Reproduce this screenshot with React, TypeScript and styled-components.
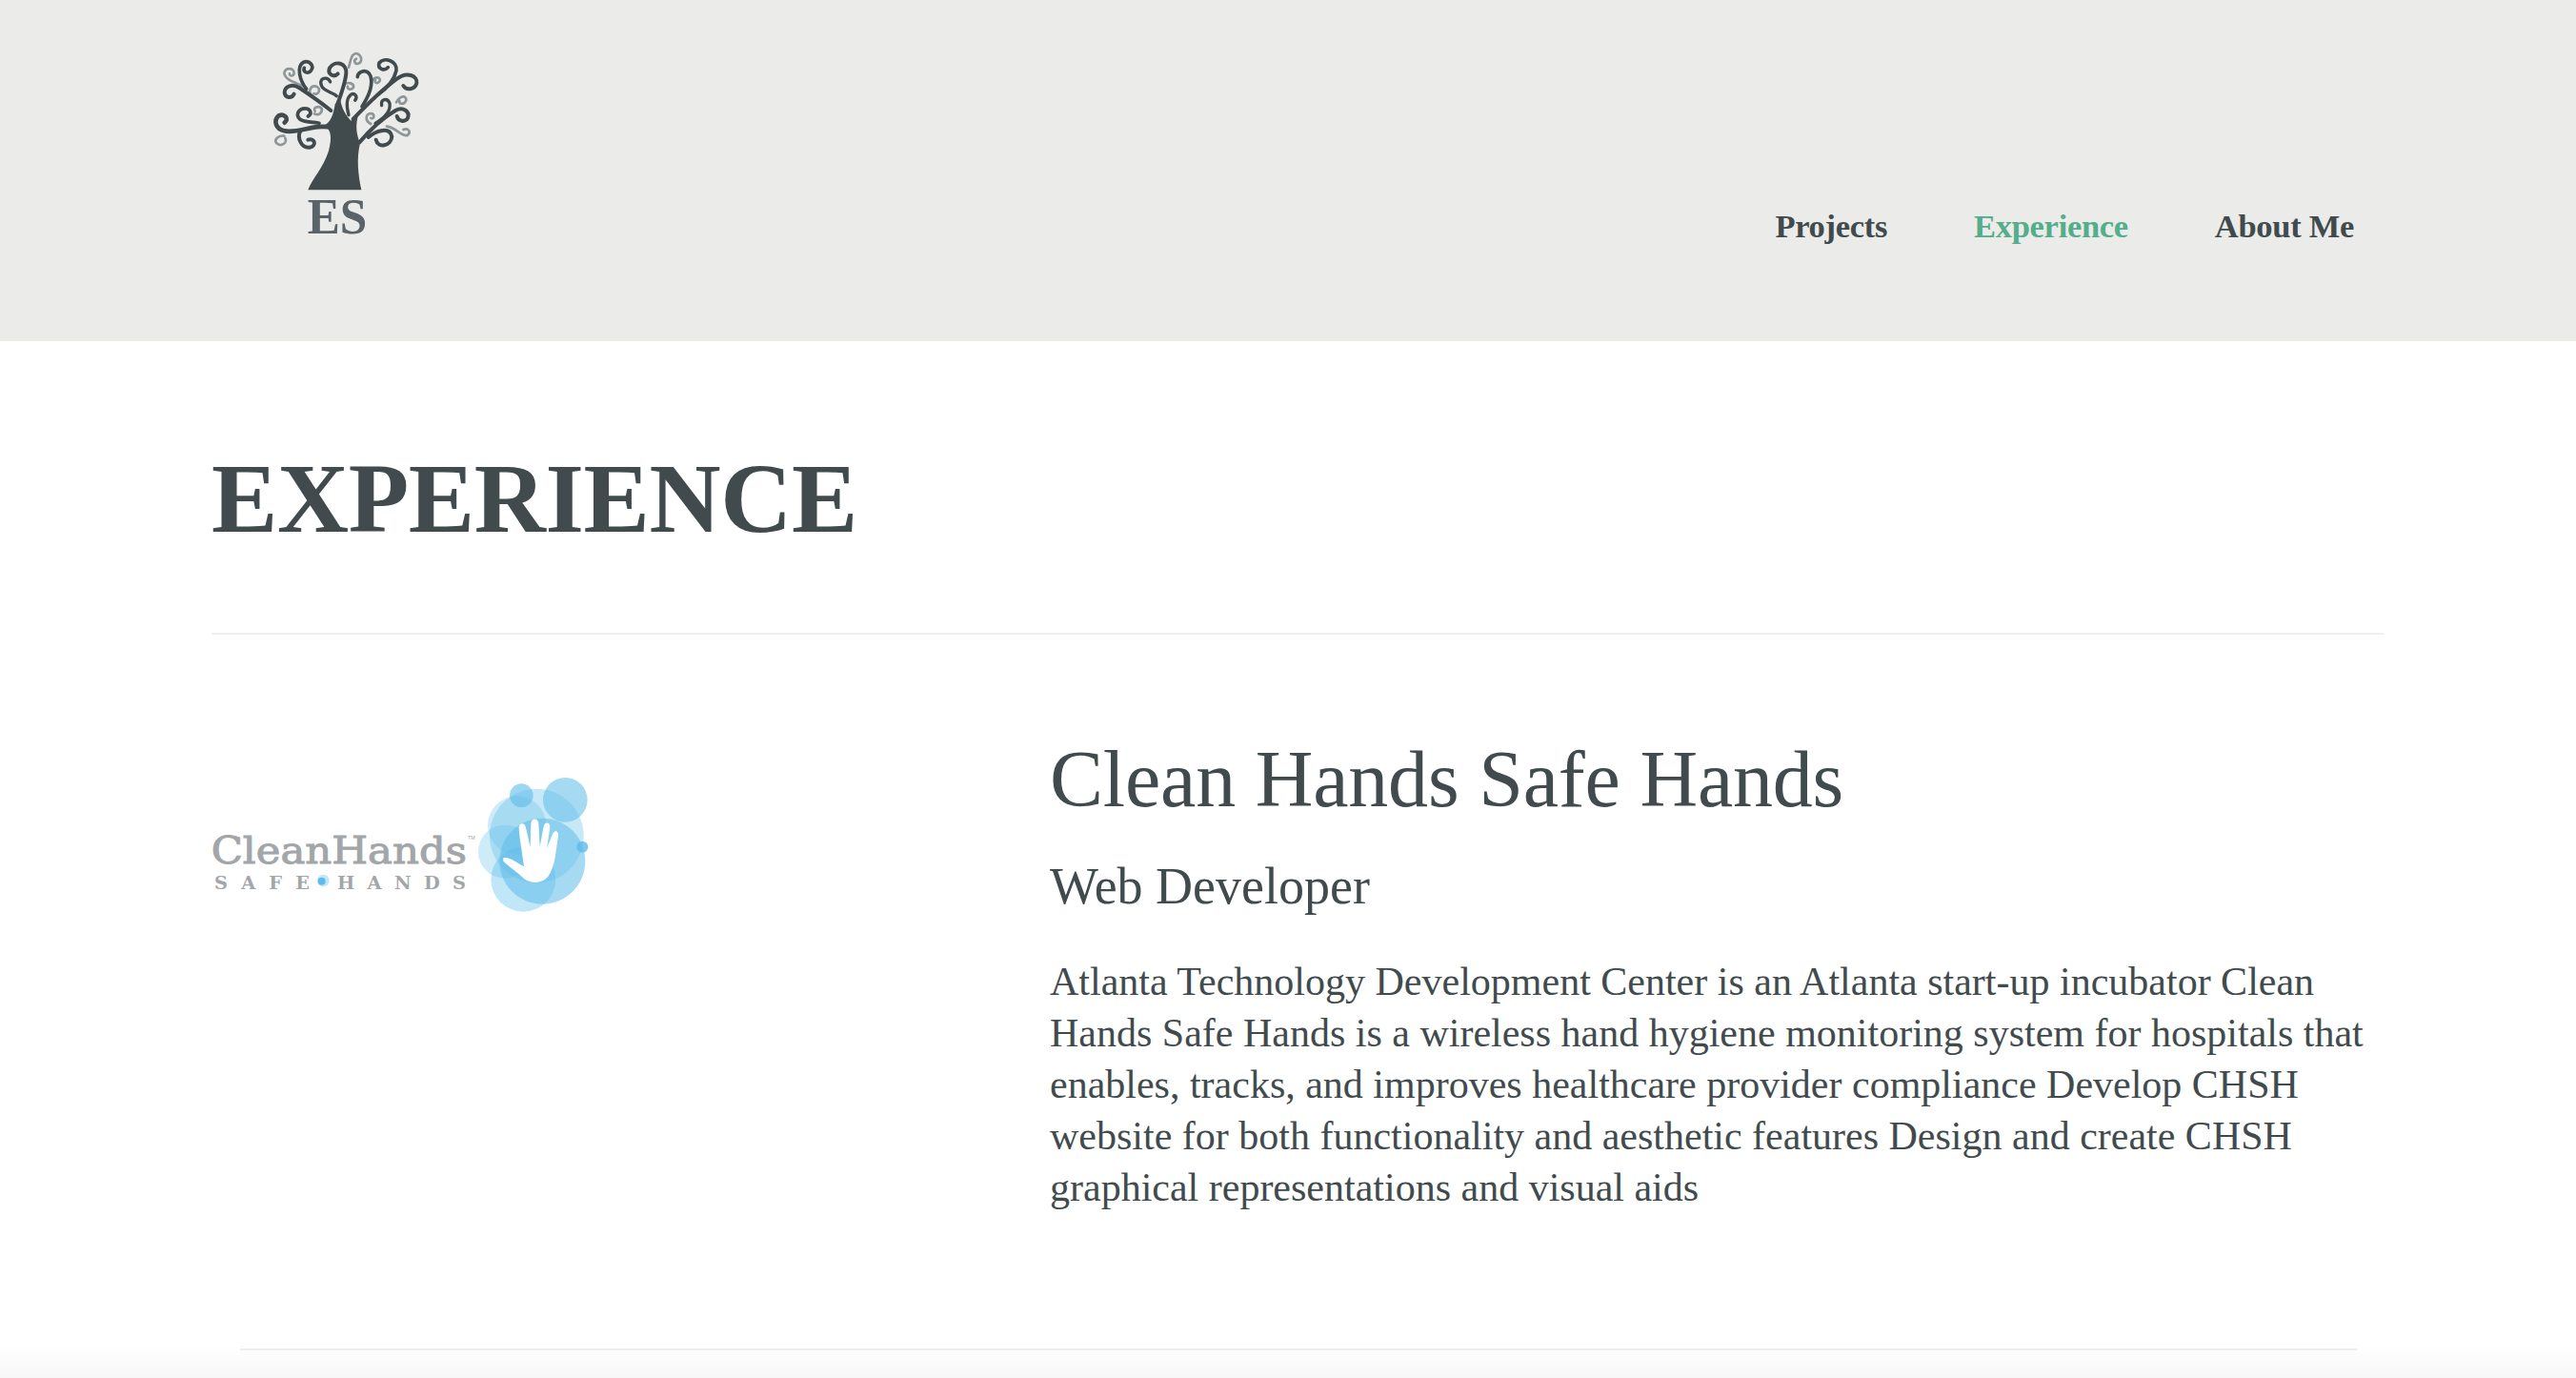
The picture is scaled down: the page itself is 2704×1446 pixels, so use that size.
import React from "react";
import styled, { createGlobalStyle } from "styled-components";

const Global = createGlobalStyle`
  html, body { margin: 0; padding: 0; background: #fff; height: 100%; overflow: hidden; }
  body { font-family: "Liberation Serif", "Times New Roman", serif; color: #414b4e; }
  #root { height: 100%; }
`;

const Page = styled.div`
  position: relative;
  height: 1446px;
  overflow: hidden;
`;

const Header = styled.header`
  height: 358px;
  background: #ebebe9;
  box-sizing: border-box;
  padding: 30px 233px 0 240px;
  display: flex;
  justify-content: space-between;
  align-items: flex-start;
`;

const LogoMark = styled.svg`
  width: 240px;
  height: 240px;
  display: block;
`;

const Nav = styled.nav`
  display: flex;
  gap: 91px;
  padding-top: 185px;
`;

const NavLink = styled.a<{ $active?: boolean }>`
  font-size: 34.5px;
  line-height: 44px;
  font-weight: 700;
  letter-spacing: -0.3px;
  color: ${(p) => (p.$active ? "#53ae8c" : "#414b4e")};
`;

const Main = styled.main`
  padding: 0 202px 0 222px;
`;

const PageTitle = styled.h1`
  margin: 0;
  padding: 100px 0 76px;
  font-size: 104px;
  line-height: 130px;
  font-weight: 700;
  letter-spacing: -0.4px;
  color: #414b4e;
  border-bottom: 2px solid #efefef;
`;

const Entry = styled.section`
  display: grid;
  grid-template-columns: 880px 1fr;
  padding-top: 97px;
`;

const CompanyLogo = styled.svg`
  width: 440px;
  height: 190px;
  display: block;
  margin: 29px 0 0 -22px;
`;

const Body = styled.div`
  width: 1385px;
`;

const Company = styled.h2`
  margin: 0;
  font-size: 84px;
  line-height: 110px;
  font-weight: 400;
  letter-spacing: -0.2px;
`;

const Role = styled.h3`
  margin: 24px 0 0;
  font-size: 54px;
  line-height: 66px;
  font-weight: 400;
`;

const Description = styled.p`
  margin: 40px 0 0;
  font-size: 42px;
  line-height: 54px;
  font-weight: 400;
`;

const Rule = styled.hr`
  position: absolute;
  left: 252px;
  right: 230px;
  top: 1415px;
  margin: 0;
  border: 0;
  height: 2px;
  background: #ececec;
`;

const BottomFade = styled.div`
  position: absolute;
  left: 0;
  right: 0;
  bottom: 0;
  height: 34px;
  background: linear-gradient(to bottom, rgba(247,247,247,0), #f7f7f7);
`;

const dark: [string, number][] = [
  ["M322 258 C290 232 255 208 222 186 C202 173 176 180 176 202 C178 218 198 222 206 206", 12],
  ["M245 190 C225 165 212 120 235 106 C255 98 272 118 258 134 C248 144 234 136 238 124", 11],
  ["M342 240 C355 205 368 170 370 140 C372 108 335 98 318 124 C310 142 330 156 344 142", 12],
  ["M340 212 C325 198 292 198 290 170 C292 152 314 152 320 168", 10],
  ["M378 272 C372 250 368 222 385 208 C396 200 408 214 398 226", 10],
  ["M392 285 C430 245 480 195 530 158 C560 134 596 148 592 172 C586 192 560 196 550 180", 12],
  ["M470 208 C498 188 522 160 528 132 C532 102 490 88 474 108 C468 126 490 136 502 122", 11],
  ["M420 245 C442 212 455 178 447 150 C435 124 408 134 406 152", 11],
  ["M412 358 C440 325 480 285 525 258 C550 244 572 262 564 282 C555 296 534 292 530 276", 12],
  ["M462 298 C485 285 512 265 507 235 C500 216 478 222 482 242", 10],
  ["M440 342 C465 320 508 308 514 340 C512 370 470 378 464 350", 12],
  ["M325 312 C270 298 220 332 175 322 C148 316 140 290 158 274 C175 266 192 284 176 296", 14],
  ["M285 298 C260 292 240 297 224 285 C208 268 224 248 246 252 C260 256 262 270 250 276", 11],
  ["M226 322 C214 345 230 378 256 374 C278 368 272 344 250 350", 12],
];
const light = [
  "M232 180 C210 170 178 162 175 140 C178 122 206 122 206 140 C205 152 190 150 192 142",
  "M262 212 C248 195 260 178 276 182 C292 190 284 210 268 205",
  "M270 268 C285 276 296 262 293 252 C282 240 264 250 272 260",
  "M175 338 C155 335 143 350 150 360 C165 374 186 360 178 345",
  "M378 122 C385 100 385 80 402 78 C422 84 422 108 405 111 C395 109 394 98 402 95",
  "M362 178 C375 164 396 174 393 185 C385 196 372 190 375 182",
  "M450 165 C465 147 479 154 476 165 C468 176 458 170 462 162",
  "M528 232 C545 204 561 214 559 226 C552 241 535 238 538 228",
  "M448 300 C428 290 430 267 451 267 C461 272 458 286 448 282",
  "M498 308 C525 310 545 342 563 336 C576 325 565 311 550 318",
];

const TreeLogo = () => (
  <LogoMark viewBox="0 0 720 720" aria-label="ES logo">
    <g fill="none" stroke="#8f9698" strokeWidth="8" strokeLinecap="round">
      {light.map((d) => <path key={d} d={d} />)}
    </g>
    <g fill="none" stroke="#414b4e" strokeLinecap="round">
      {dark.map(([d, w]) => <path key={d} d={d} strokeWidth={w} />)}
    </g>
    <path
      fill="#414b4e"
      d="M250 508 C262 475 300 435 315 385 C325 345 325 318 300 305 C322 296 330 270 335 238 L352 225 C356 250 368 272 385 290 C394 282 402 276 410 268 C398 300 402 335 414 360 C402 410 408 460 418 508 Z"
    />
    <text x="342" y="646" textAnchor="middle" fontFamily="'Liberation Serif', serif" fontSize="156" fontWeight="700" fill="#59636a" textLength="188" lengthAdjust="spacingAndGlyphs">ES</text>
  </LogoMark>
);

const HandsLogo = () => (
  <CompanyLogo viewBox="0 0 1320 570" aria-label="Clean Hands Safe Hands logo">
    <g fill="#5cbce9">
      <circle cx="1048" cy="392" r="102" opacity="0.38" />
      <circle cx="990" cy="305" r="84" opacity="0.3" />
      <circle cx="1090" cy="255" r="148" opacity="0.34" />
      <circle cx="1028" cy="222" r="92" opacity="0.3" />
      <circle cx="1108" cy="335" r="135" opacity="0.55" />
      <circle cx="1180" cy="142" r="70" opacity="0.55" />
      <circle cx="1042" cy="128" r="37" opacity="0.6" />
      <circle cx="1234" cy="290" r="18" opacity="0.8" />
    </g>
    <path
      fill="#fff"
      d="M985 325 C1000 318 1030 340 1050 352 C1045 310 1035 260 1034 228 C1036 212 1054 214 1056 230 L1070 290 L1072 215 C1074 198 1094 198 1096 215 L1100 290 L1112 225 C1116 210 1132 212 1132 228 L1122 295 L1140 250 C1146 235 1160 240 1158 255 C1150 300 1150 350 1125 385 C1105 408 1070 405 1050 390 C1030 370 1000 350 985 335 Z"
    />
    <text x="65" y="342" fontFamily="'DejaVu Serif', serif" fontSize="118" fill="#a3a6a9" stroke="#a3a6a9" strokeWidth="3" textLength="805" lengthAdjust="spacingAndGlyphs">CleanHands</text>
    <text x="873" y="266" fontFamily="'Liberation Sans', sans-serif" fontSize="16" fill="#a3a6a9">TM</text>
    <text x="75" y="422" fontFamily="'DejaVu Serif', serif" fontSize="58" fontWeight="700" fill="#a3a6a9" textLength="300" lengthAdjust="spacing">SAFE</text>
    <circle cx="418" cy="396" r="19" fill="#c4e7f8" />
    <circle cx="413" cy="398" r="12" fill="#5dbcec" />
    <text x="462" y="422" fontFamily="'DejaVu Serif', serif" fontSize="58" fontWeight="700" fill="#a3a6a9" textLength="405" lengthAdjust="spacing">HANDS</text>
  </CompanyLogo>
);

export default function App() {
  return (
    <Page>
      <Global />
      <Header>
        <TreeLogo />
        <Nav>
          <NavLink>Projects</NavLink>
          <NavLink $active>Experience</NavLink>
          <NavLink>About Me</NavLink>
        </Nav>
      </Header>
      <Main>
        <PageTitle>EXPERIENCE</PageTitle>
        <Entry>
          <HandsLogo />
          <Body>
            <Company>Clean Hands Safe Hands</Company>
            <Role>Web Developer</Role>
            <Description>
              Atlanta Technology Development Center is an Atlanta start-up incubator Clean Hands Safe Hands is a wireless hand hygiene monitoring system for hospitals that enables, tracks, and improves healthcare provider compliance Develop CHSH website for both functionality and aesthetic features Design and create CHSH graphical representations and visual aids
            </Description>
          </Body>
        </Entry>
      </Main>
      <Rule />
      <BottomFade />
    </Page>
  );
}
